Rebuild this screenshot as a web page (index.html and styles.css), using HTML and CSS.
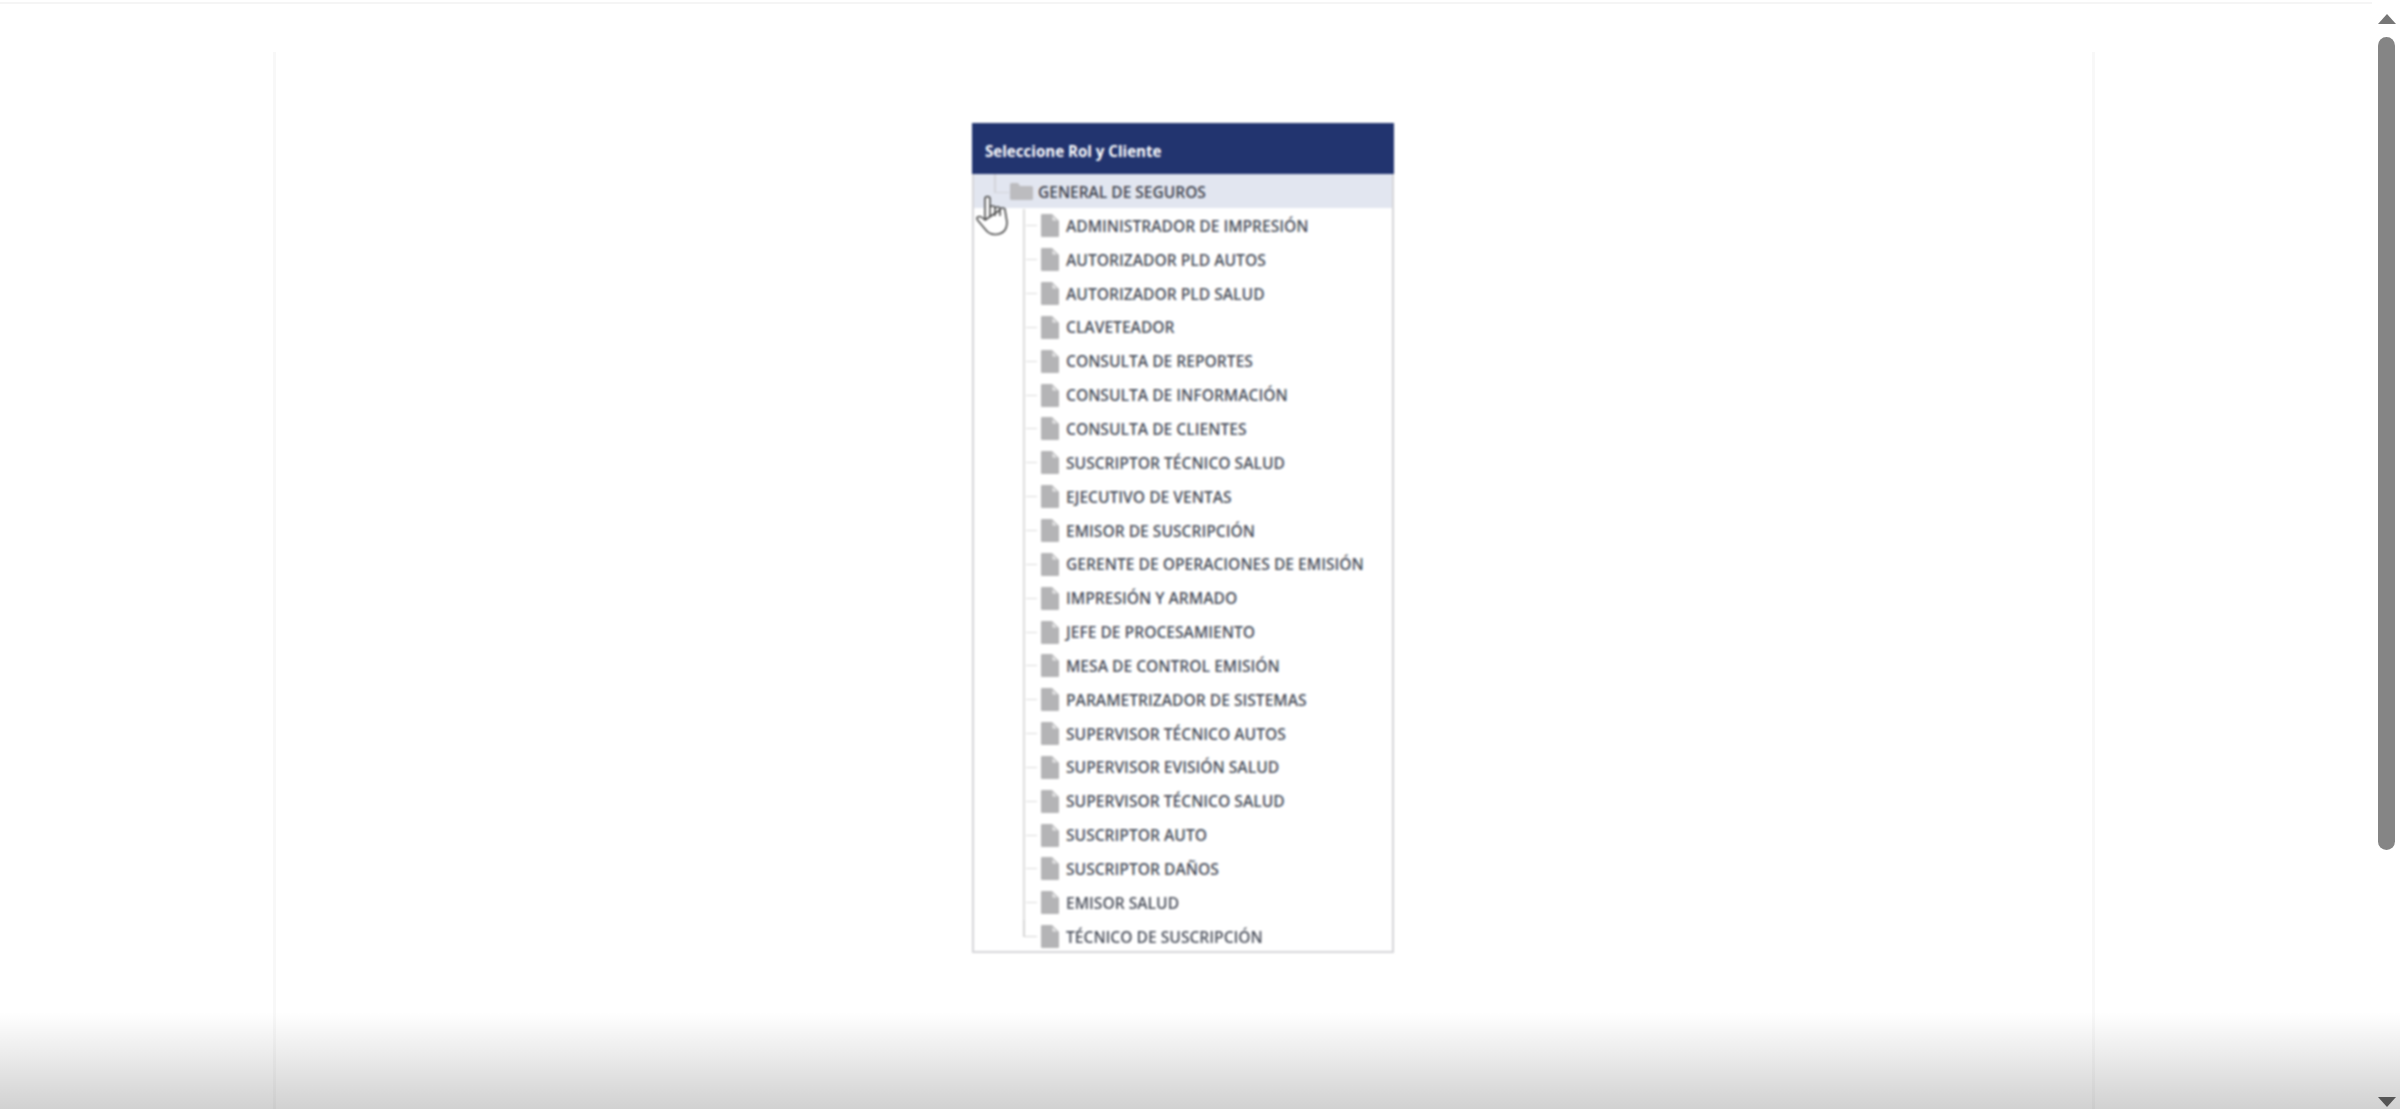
FILE: index.html
```html
<!DOCTYPE html>
<html lang="es">
<head>
<meta charset="utf-8">
<title>Seleccione Rol y Cliente</title>
<link rel="stylesheet" href="styles.css">
</head>
<body>
<div class="page">
  <main class="main">
    <div class="sheet">
      <section class="panel">
        <h1 class="panel-title">Seleccione Rol y Cliente</h1>
        <div class="root-row">
          <span class="root-conn"></span>
          <svg class="folder" viewBox="0 0 23 17"><path d="M0 1.5Q0 0 1.5 0H8l2 3h11.5Q23 3 23 4.5V15.5Q23 17 21.500 17H1.500Q0 17 0 15.500Z"/></svg>
          <span class="root-label">GENERAL DE SEGUROS</span>
          <svg class="hand" viewBox="0 0 33 41"><path d="M9 25V4Q9 1.500 11.500 1.500T14 4V21M14 13Q14 11 16.500 11T19 13V21M19 14Q19 12 21.500 12T24 14V21M24 15Q24 13 26.500 13T29 15L31 27Q31 39 19 39.500Q13 39.500 9 34L1.500 25Q0 22 3 21.500Q5 21 9 25Z"/></svg>
        </div>
        <ul class="tree">
          <li class="item"><span class="conn"></span><svg class="doc" viewBox="0 0 18 23"><path d="M1 0H11L18 7V22Q18 23 17 23H1Q0 23 0 22V1Q0 0 1 0Z"/><path class="fold" d="M11.500 2L16 6.500H11.500Z"/></svg><span class="label">ADMINISTRADOR DE IMPRESIÓN</span></li>
          <li class="item"><span class="conn"></span><svg class="doc" viewBox="0 0 18 23"><path d="M1 0H11L18 7V22Q18 23 17 23H1Q0 23 0 22V1Q0 0 1 0Z"/><path class="fold" d="M11.500 2L16 6.500H11.500Z"/></svg><span class="label">AUTORIZADOR PLD AUTOS</span></li>
          <li class="item"><span class="conn"></span><svg class="doc" viewBox="0 0 18 23"><path d="M1 0H11L18 7V22Q18 23 17 23H1Q0 23 0 22V1Q0 0 1 0Z"/><path class="fold" d="M11.500 2L16 6.500H11.500Z"/></svg><span class="label">AUTORIZADOR PLD SALUD</span></li>
          <li class="item"><span class="conn"></span><svg class="doc" viewBox="0 0 18 23"><path d="M1 0H11L18 7V22Q18 23 17 23H1Q0 23 0 22V1Q0 0 1 0Z"/><path class="fold" d="M11.500 2L16 6.500H11.500Z"/></svg><span class="label">CLAVETEADOR</span></li>
          <li class="item"><span class="conn"></span><svg class="doc" viewBox="0 0 18 23"><path d="M1 0H11L18 7V22Q18 23 17 23H1Q0 23 0 22V1Q0 0 1 0Z"/><path class="fold" d="M11.500 2L16 6.500H11.500Z"/></svg><span class="label">CONSULTA DE REPORTES</span></li>
          <li class="item"><span class="conn"></span><svg class="doc" viewBox="0 0 18 23"><path d="M1 0H11L18 7V22Q18 23 17 23H1Q0 23 0 22V1Q0 0 1 0Z"/><path class="fold" d="M11.500 2L16 6.500H11.500Z"/></svg><span class="label">CONSULTA DE INFORMACIÓN</span></li>
          <li class="item"><span class="conn"></span><svg class="doc" viewBox="0 0 18 23"><path d="M1 0H11L18 7V22Q18 23 17 23H1Q0 23 0 22V1Q0 0 1 0Z"/><path class="fold" d="M11.500 2L16 6.500H11.500Z"/></svg><span class="label">CONSULTA DE CLIENTES</span></li>
          <li class="item"><span class="conn"></span><svg class="doc" viewBox="0 0 18 23"><path d="M1 0H11L18 7V22Q18 23 17 23H1Q0 23 0 22V1Q0 0 1 0Z"/><path class="fold" d="M11.500 2L16 6.500H11.500Z"/></svg><span class="label">SUSCRIPTOR TÉCNICO SALUD</span></li>
          <li class="item"><span class="conn"></span><svg class="doc" viewBox="0 0 18 23"><path d="M1 0H11L18 7V22Q18 23 17 23H1Q0 23 0 22V1Q0 0 1 0Z"/><path class="fold" d="M11.500 2L16 6.500H11.500Z"/></svg><span class="label">EJECUTIVO DE VENTAS</span></li>
          <li class="item"><span class="conn"></span><svg class="doc" viewBox="0 0 18 23"><path d="M1 0H11L18 7V22Q18 23 17 23H1Q0 23 0 22V1Q0 0 1 0Z"/><path class="fold" d="M11.500 2L16 6.500H11.500Z"/></svg><span class="label">EMISOR DE SUSCRIPCIÓN</span></li>
          <li class="item"><span class="conn"></span><svg class="doc" viewBox="0 0 18 23"><path d="M1 0H11L18 7V22Q18 23 17 23H1Q0 23 0 22V1Q0 0 1 0Z"/><path class="fold" d="M11.500 2L16 6.500H11.500Z"/></svg><span class="label">GERENTE DE OPERACIONES DE EMISIÓN</span></li>
          <li class="item"><span class="conn"></span><svg class="doc" viewBox="0 0 18 23"><path d="M1 0H11L18 7V22Q18 23 17 23H1Q0 23 0 22V1Q0 0 1 0Z"/><path class="fold" d="M11.500 2L16 6.500H11.500Z"/></svg><span class="label">IMPRESIÓN Y ARMADO</span></li>
          <li class="item"><span class="conn"></span><svg class="doc" viewBox="0 0 18 23"><path d="M1 0H11L18 7V22Q18 23 17 23H1Q0 23 0 22V1Q0 0 1 0Z"/><path class="fold" d="M11.500 2L16 6.500H11.500Z"/></svg><span class="label">JEFE DE PROCESAMIENTO</span></li>
          <li class="item"><span class="conn"></span><svg class="doc" viewBox="0 0 18 23"><path d="M1 0H11L18 7V22Q18 23 17 23H1Q0 23 0 22V1Q0 0 1 0Z"/><path class="fold" d="M11.500 2L16 6.500H11.500Z"/></svg><span class="label">MESA DE CONTROL EMISIÓN</span></li>
          <li class="item"><span class="conn"></span><svg class="doc" viewBox="0 0 18 23"><path d="M1 0H11L18 7V22Q18 23 17 23H1Q0 23 0 22V1Q0 0 1 0Z"/><path class="fold" d="M11.500 2L16 6.500H11.500Z"/></svg><span class="label">PARAMETRIZADOR DE SISTEMAS</span></li>
          <li class="item"><span class="conn"></span><svg class="doc" viewBox="0 0 18 23"><path d="M1 0H11L18 7V22Q18 23 17 23H1Q0 23 0 22V1Q0 0 1 0Z"/><path class="fold" d="M11.500 2L16 6.500H11.500Z"/></svg><span class="label">SUPERVISOR TÉCNICO AUTOS</span></li>
          <li class="item"><span class="conn"></span><svg class="doc" viewBox="0 0 18 23"><path d="M1 0H11L18 7V22Q18 23 17 23H1Q0 23 0 22V1Q0 0 1 0Z"/><path class="fold" d="M11.500 2L16 6.500H11.500Z"/></svg><span class="label">SUPERVISOR EVISIÓN SALUD</span></li>
          <li class="item"><span class="conn"></span><svg class="doc" viewBox="0 0 18 23"><path d="M1 0H11L18 7V22Q18 23 17 23H1Q0 23 0 22V1Q0 0 1 0Z"/><path class="fold" d="M11.500 2L16 6.500H11.500Z"/></svg><span class="label">SUPERVISOR TÉCNICO SALUD</span></li>
          <li class="item"><span class="conn"></span><svg class="doc" viewBox="0 0 18 23"><path d="M1 0H11L18 7V22Q18 23 17 23H1Q0 23 0 22V1Q0 0 1 0Z"/><path class="fold" d="M11.500 2L16 6.500H11.500Z"/></svg><span class="label">SUSCRIPTOR AUTO</span></li>
          <li class="item"><span class="conn"></span><svg class="doc" viewBox="0 0 18 23"><path d="M1 0H11L18 7V22Q18 23 17 23H1Q0 23 0 22V1Q0 0 1 0Z"/><path class="fold" d="M11.500 2L16 6.500H11.500Z"/></svg><span class="label">SUSCRIPTOR DAÑOS</span></li>
          <li class="item"><span class="conn"></span><svg class="doc" viewBox="0 0 18 23"><path d="M1 0H11L18 7V22Q18 23 17 23H1Q0 23 0 22V1Q0 0 1 0Z"/><path class="fold" d="M11.500 2L16 6.500H11.500Z"/></svg><span class="label">EMISOR SALUD</span></li>
          <li class="item item-last"><span class="conn"></span><svg class="doc" viewBox="0 0 18 23"><path d="M1 0H11L18 7V22Q18 23 17 23H1Q0 23 0 22V1Q0 0 1 0Z"/><path class="fold" d="M11.500 2L16 6.500H11.500Z"/></svg><span class="label">TÉCNICO DE SUSCRIPCIÓN</span></li>
        </ul>
      </section>
    </div>
  </main>
  <aside class="scrollbar">
    <span class="arrow arrow-up"></span>
    <span class="thumb"></span>
    <span class="arrow arrow-down"></span>
  </aside>
  <div class="fade"></div>
</div>
</body>
</html>
```

FILE: styles.css
```css
* { box-sizing: border-box; }
html, body { margin: 0; height: 100%; overflow: hidden; background: #fff; }
.page {
  position: relative;
  display: flex;
  width: 2400px;
  height: 1109px;
  overflow: hidden;
  font-family: "Open Sans", "Noto Sans", sans-serif;
}
.main {
  flex: 1;
  height: 1109px;
  margin-top: 2px;
  border-top: 2px solid #f5f5f5;
  padding-left: 273px;
}
.sheet {
  width: 1822px;
  height: 1105px;
  margin-top: 48px;
  border-left: 3px solid #f8f8f8;
  border-right: 3px solid #f8f8f8;
  padding: 71px 2px 0 0;
  display: flex;
  justify-content: center;
  align-items: flex-start;
}
.panel {
  width: 422px;
  height: 830px;
  border: 2px solid #d5d5d8;
  border-top: 0;
  background: #fff;
  filter: blur(0.8px);
}
.panel-title {
  margin: 0 -2px;
  height: 51px;
  padding: 18px 0 0 13px;
  background: #22346f;
  color: #fff;
  font-size: 15.100px;
  font-weight: 700;
  line-height: 20px;
}
.root-row {
  position: relative;
  display: flex;
  align-items: center;
  height: 34px;
  padding: 1px 0 0 20px;
  background: #e2e6f0;
}
.root-conn {
  align-self: stretch;
  width: 15px;
  margin: -1px 1px 0 0;
  background:
    linear-gradient(#d2d4d9, #d2d4d9) left top / 2px 18px no-repeat,
    linear-gradient(#d2d4d9, #d2d4d9) left 18px / 100% 1px no-repeat;
}
.folder { width: 23px; height: 17px; fill: #bcbcbf; flex: none; }
.root-label {
  margin-left: 5px;
  font-size: 15.500px;
  font-weight: 600;
  color: #3f434e;
  white-space: nowrap;
}
.hand {
  position: absolute;
  left: 2px;
  top: 21px;
  width: 33px;
  height: 41px;
  fill: #fff;
  stroke: #4a4a4a;
  stroke-width: 1.600;
  stroke-linejoin: round;
}
.tree { list-style: none; margin: 0; padding: 1px 0 0 49px; }
.item {
  display: flex;
  align-items: center;
  height: 33.850px;
}
.conn {
  align-self: stretch;
  flex: none;
  width: 14px;
  margin-right: 4px;
  background:
    linear-gradient(#dcdcdc, #dcdcdc) left top / 2px 100% no-repeat,
    linear-gradient(#dcdcdc, #dcdcdc) 3px 50% / 100% 1px no-repeat;
}
.item-last .conn {
  background:
    linear-gradient(#d5d5d5, #d5d5d5) left top / 2px 50% no-repeat,
    linear-gradient(#d5d5d5, #d5d5d5) 0 50% / 100% 1px no-repeat;
}
.doc { width: 18px; height: 23px; flex: none; fill: #b4b4b6; }
.doc .fold { fill: #e9e9ea; }
.label {
  margin-left: 7px;
  font-size: 15.600px;
  font-weight: 600;
  color: #4a4f5b;
  white-space: nowrap;
}
.scrollbar {
  flex: none;
  width: 28px;
  padding: 14px 4px 2px 5px;
  display: flex;
  flex-direction: column;
  align-items: center;
  height: 1109px;
}
.thumb {
  width: 17px;
  height: 813px;
  margin-top: 13px;
  border-radius: 9px;
  background: #858585;
  filter: blur(0.5px);
}
.arrow { width: 0; height: 0; border-left: 9.500px solid transparent; border-right: 9.500px solid transparent; }
.arrow-up { border-bottom: 10px solid #777; }
.arrow-down { margin-top: auto; border-top: 10px solid #666; }
.fade {
  position: absolute;
  left: 0;
  right: 0;
  bottom: 0;
  height: 97px;
  background: linear-gradient(rgba(0,0,0,0), rgba(0,0,0,.02) 12%, rgba(0,0,0,.18));
  pointer-events: none;
}
```
